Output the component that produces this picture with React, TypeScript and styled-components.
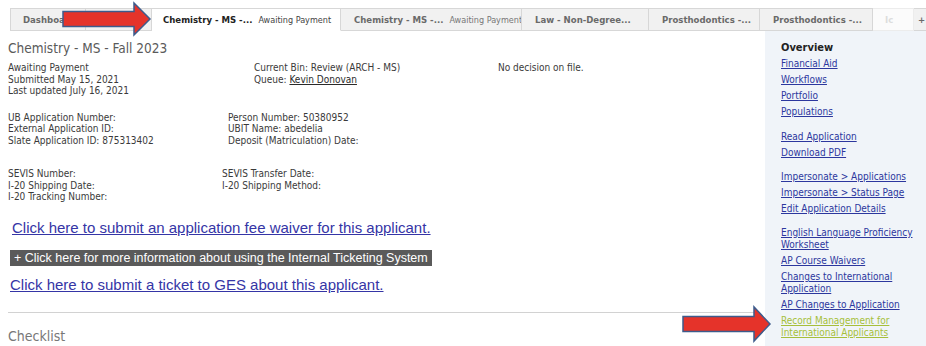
import React from 'react'
import styled, { createGlobalStyle } from 'styled-components'

const bodyFont = '"DejaVu Sans Condensed", "Liberation Sans", Arial, sans-serif'
const webFont = '"Liberation Sans", Arial, sans-serif'

const GlobalStyle = createGlobalStyle`
    html, body {
        margin: 0;
        padding: 0;
        background: #ffffff;
    }
    body {
        font-family: ${bodyFont};
        color: #333333;
        overflow: hidden;
    }
`

const Page = styled.div`
    position: relative;
    width: 926px;
    height: 346px;
    overflow: hidden;
`

const TabStrip = styled.div`
    display: flex;
    align-items: flex-end;
    height: 31px;
    padding: 8px 0 0 10px;
    box-sizing: border-box;
    white-space: nowrap;
`

const Tab = styled.div<{ $w: number; $pad: number; $active?: boolean; $faded?: boolean; $first?: boolean }>`
    flex: 0 0 auto;
    display: flex;
    align-items: center;
    gap: 6px;
    width: ${p => p.$w}px;
    height: 23px;
    box-sizing: border-box;
    padding-left: ${p => p.$pad}px;
    overflow: hidden;
    background: ${p => (p.$active ? '#ffffff' : p.$faded ? '#fbfbfb' : '#f1f1f1')};
    border: 1px solid ${p => (p.$faded ? '#ececec' : '#d7d7d7')};
    border-left: ${p => (p.$first ? '1px solid #d7d7d7' : 'none')};
    border-bottom-color: ${p => (p.$active ? '#ffffff' : p.$faded ? '#ececec' : '#d7d7d7')};
    font-size: 9.5px;
    font-weight: bold;
    color: ${p => (p.$active ? '#222222' : p.$faded ? '#dddddd' : '#6a6a6a')};
`

const TabSub = styled.span<{ $active?: boolean }>`
    font-size: 9px;
    font-weight: normal;
    color: ${p => (p.$active ? '#444444' : '#777777')};
`

const Layout = styled.div`
    display: flex;
    height: 315px;
`

const Main = styled.div`
    flex: 1;
    padding: 8px 9px 0 8px;
`

const Title = styled.h1`
    margin: 0 0 5px;
    font-size: 13.5px;
    line-height: 18px;
    font-weight: normal;
    color: #5a5a5a;
`

const InfoBlock = styled.div<{ $cols: string; $mt: number }>`
    display: grid;
    grid-template-columns: ${p => p.$cols};
    margin-top: ${p => p.$mt}px;
    font-size: 10px;
    line-height: 11.5px;
    color: #3a3a3a;
`

const Plain = styled.a`
    color: #2a2a2a;
    text-decoration: underline;
`

const BigLink = styled.a<{ $ml: number; $mt: number }>`
    display: block;
    width: fit-content;
    margin: ${p => p.$mt}px 0 0 ${p => p.$ml}px;
    font-family: ${webFont};
    font-size: 15px;
    line-height: 18px;
    color: #3535a6;
    text-decoration: underline;
`

const InfoBar = styled.div`
    width: fit-content;
    margin: 13px 0 0 2px;
    padding: 0 4px;
    background: #5a5a5a;
    color: #ffffff;
    font-family: ${webFont};
    font-size: 12.5px;
    line-height: 16px;
`

const Rule = styled.hr`
    margin: 18px 0 0;
    border: none;
    border-top: 1px solid #d2d2d2;
`

const Section = styled.h2`
    margin: 14px 0 0;
    font-size: 14px;
    line-height: 18px;
    font-weight: normal;
    color: #777777;
`

const Sidebar = styled.div`
    display: flex;
    flex-direction: column;
    align-items: flex-start;
    width: 161px;
    flex: 0 0 161px;
    box-sizing: border-box;
    padding: 11px 6px 0 16px;
    background: #f0f4f9;
`

const SideTitle = styled.div`
    margin-bottom: 4px;
    font-size: 11px;
    line-height: 12px;
    font-weight: bold;
    color: #222222;
`

const SideGroup = styled.div<{ $gap: number }>`
    display: flex;
    flex-direction: column;
    align-items: flex-start;
    margin-top: ${p => p.$gap}px;
`

const SideLink = styled.a<{ $tone?: string }>`
    display: block;
    margin-bottom: 4px;
    font-size: 10px;
    line-height: 12px;
    color: ${p => p.$tone || '#2c379e'};
    text-decoration: underline;
`

const Pointer = styled.svg<{ $x: number; $y: number }>`
    position: absolute;
    left: ${p => p.$x}px;
    top: ${p => p.$y}px;
    overflow: visible;
`

function Arrow({ x, y, w, h }: { x: number; y: number; w: number; h: number }) {
    const mid = h / 2
    const body = 7.5
    const base = w - 16
    const pts = [
        [3, mid - body], [base, mid - body], [base, 3], [w, mid],
        [base, h - 3], [base, mid + body], [3, mid + body],
    ].map(p => p.join(',')).join(' ')
    return (
        <Pointer $x={x} $y={y} width={w} height={h} viewBox={`0 0 ${w} ${h}`}>
            <polygon points={pts} fill="#e5332a" stroke="#3d5b8c" strokeWidth="1.5" strokeLinejoin="miter" />
        </Pointer>
    )
}

const tabs = [
    { w: 76, pad: 12, label: 'Dashboard', first: true },
    { w: 66, pad: 12, label: '' },
    { w: 189, pad: 11, label: 'Chemistry - MS -...', sub: 'Awaiting Payment', active: true },
    { w: 181, pad: 13, label: 'Chemistry - MS -...', sub: 'Awaiting Payment' },
    { w: 127, pad: 13, label: 'Law - Non-Degree...' },
    { w: 111, pad: 13, label: 'Prosthodontics -...' },
    { w: 113, pad: 13, label: 'Prosthodontics -...' },
    { w: 41, pad: 12, label: 'Ic', faded: true },
    { w: 26, pad: 4, label: '+' },
]

function App() {
    return (
        <Page>
            <GlobalStyle />
            <TabStrip>
                {tabs.map((t, i) => (
                    <Tab key={i} $w={t.w} $pad={t.pad} $active={t.active} $faded={t.faded} $first={t.first}>
                        {t.label}
                        {t.sub && <TabSub $active={t.active}>{t.sub}</TabSub>}
                    </Tab>
                ))}
            </TabStrip>
            <Layout>
                <Main>
                    <Title>Chemistry - MS - Fall 2023</Title>
                    <InfoBlock $cols="246px 244px auto" $mt={0}>
                        <div>
                            <div>Awaiting Payment</div>
                            <div>Submitted May 15, 2021</div>
                            <div>Last updated July 16, 2021</div>
                        </div>
                        <div>
                            <div>Current Bin: Review (ARCH - MS)</div>
                            <div>Queue: <Plain href="#">Kevin Donovan</Plain></div>
                        </div>
                        <div>No decision on file.</div>
                    </InfoBlock>
                    <InfoBlock $cols="220px auto" $mt={15}>
                        <div>
                            <div>UB Application Number:</div>
                            <div>External Application ID:</div>
                            <div>Slate Application ID: 875313402</div>
                        </div>
                        <div>
                            <div>Person Number: 50380952</div>
                            <div>UBIT Name: abedelia</div>
                            <div>Deposit (Matriculation) Date:</div>
                        </div>
                    </InfoBlock>
                    <InfoBlock $cols="214px auto" $mt={22}>
                        <div>
                            <div>SEVIS Number:</div>
                            <div>I-20 Shipping Date:</div>
                            <div>I-20 Tracking Number:</div>
                        </div>
                        <div>
                            <div>SEVIS Transfer Date:</div>
                            <div>I-20 Shipping Method:</div>
                        </div>
                    </InfoBlock>
                    <BigLink href="#" $ml={4} $mt={16}>Click here to submit an application fee waiver for this applicant.</BigLink>
                    <InfoBar>+ Click here for more information about using the Internal Ticketing System</InfoBar>
                    <BigLink href="#" $ml={2} $mt={10}>Click here to submit a ticket to GES about this applicant.</BigLink>
                    <Rule />
                    <Section>Checklist</Section>
                </Main>
                <Sidebar>
                    <SideTitle>Overview</SideTitle>
                    <SideLink href="#">Financial Aid</SideLink>
                    <SideLink href="#">Workflows</SideLink>
                    <SideLink href="#">Portfolio</SideLink>
                    <SideLink href="#">Populations</SideLink>
                    <SideGroup $gap={9}>
                        <SideLink href="#">Read Application</SideLink>
                        <SideLink href="#">Download PDF</SideLink>
                    </SideGroup>
                    <SideGroup $gap={8}>
                        <SideLink href="#">Impersonate &gt; Applications</SideLink>
                        <SideLink href="#">Impersonate &gt; Status Page</SideLink>
                        <SideLink href="#">Edit Application Details</SideLink>
                    </SideGroup>
                    <SideGroup $gap={8}>
                        <SideLink href="#">English Language Proficiency Worksheet</SideLink>
                        <SideLink href="#">AP Course Waivers</SideLink>
                        <SideLink href="#">Changes to International Application</SideLink>
                        <SideLink href="#">AP Changes to Application</SideLink>
                        <SideLink href="#" $tone="#a6bf3a">Record Management for International Applicants</SideLink>
                    </SideGroup>
                </Sidebar>
            </Layout>
            <Arrow x={60} y={0} w={90} h={38} />
            <Arrow x={680} y={304} w={90} h={40} />
        </Page>
    )
}

export default App
